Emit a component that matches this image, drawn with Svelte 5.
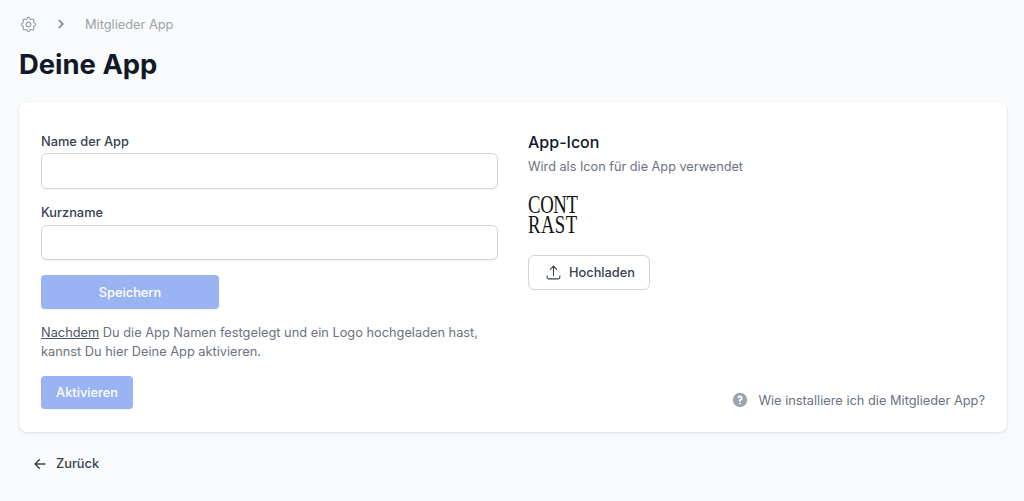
<script>
	let appName = $state('');
	let shortName = $state('');
</script>

<div class="page">
	<nav class="crumbs">
		<svg class="gear" viewBox="0 0 24 24" fill="none" stroke="currentColor" stroke-width="1.5" stroke-linecap="round" stroke-linejoin="round">
			<path d="M10.325 4.317c.426-1.756 2.924-1.756 3.35 0a1.724 1.724 0 002.573 1.066c1.543-.94 3.31.826 2.37 2.37a1.724 1.724 0 001.065 2.572c1.756.426 1.756 2.924 0 3.35a1.724 1.724 0 00-1.066 2.573c.94 1.543-.826 3.31-2.37 2.37a1.724 1.724 0 00-2.572 1.065c-.426 1.756-2.924 1.756-3.35 0a1.724 1.724 0 00-2.573-1.066c-1.543.94-3.31-.826-2.37-2.37a1.724 1.724 0 00-1.065-2.572c-1.756-.426-1.756-2.924 0-3.35a1.724 1.724 0 001.066-2.573c-.94-1.543.826-3.31 2.37-2.37.996.608 2.296.07 2.572-1.065z" />
			<circle cx="12" cy="12" r="3" />
		</svg>
		<svg class="chevron" viewBox="0 0 20 20" fill="currentColor">
			<path fill-rule="evenodd" clip-rule="evenodd" d="M7.293 14.707a1 1 0 010-1.414L10.586 10 7.293 6.707a1 1 0 011.414-1.414l4 4a1 1 0 010 1.414l-4 4a1 1 0 01-1.414 0z" />
		</svg>
		<span>Mitglieder App</span>
	</nav>

	<h1>Deine App</h1>

	<section class="card">
		<div class="left">
			<label for="app-name">Name der App</label>
			<input id="app-name" type="text" bind:value={appName} />

			<label for="short-name" class="second">Kurzname</label>
			<input id="short-name" type="text" bind:value={shortName} />

			<button class="primary save">Speichern</button>

			<p class="hint"><u>Nachdem</u> Du die App Namen festgelegt und ein Logo hochgeladen hast,<br />kannst Du hier Deine App aktivieren.</p>

			<button class="primary activate">Aktivieren</button>
		</div>

		<div class="right">
			<h2>App-Icon</h2>
			<p class="sub">Wird als Icon für die App verwendet</p>

			<div class="logo" aria-label="Contrast">
				<span>CONT</span>
				<span class="wide">RAST</span>
			</div>

			<button class="upload">
				<svg viewBox="0 0 24 24" fill="none" stroke="currentColor" stroke-width="1.5" stroke-linecap="round" stroke-linejoin="round">
					<path d="M3 16.5v2.25A2.25 2.25 0 005.25 21h13.5A2.25 2.25 0 0021 18.75V16.5m-13.5-9L12 3m0 0l4.5 4.5M12 3v13.5" />
				</svg>
				Hochladen
			</button>

			<div class="help">
				<svg viewBox="0 0 20 20" fill="currentColor">
					<path fill-rule="evenodd" clip-rule="evenodd" d="M18 10a8 8 0 11-16 0 8 8 0 0116 0zm-8-3a1 1 0 00-.867.5 1 1 0 11-1.731-1A3 3 0 0113 8a3.001 3.001 0 01-2 2.83V11a1 1 0 11-2 0v-1a1 1 0 011-1 1 1 0 100-2zm0 8a1 1 0 100-2 1 1 0 000 2z" />
				</svg>
				<span>Wie installiere ich die Mitglieder App?</span>
			</div>
		</div>
	</section>

	<div class="back">
		<svg viewBox="0 0 20 20" fill="currentColor">
			<path fill-rule="evenodd" clip-rule="evenodd" d="M9.707 16.707a1 1 0 01-1.414 0l-6-6a1 1 0 010-1.414l6-6a1 1 0 011.414 1.414L5.414 9H17a1 1 0 110 2H5.414l4.293 4.293a1 1 0 010 1.414z" />
		</svg>
		<span>Zurück</span>
	</div>
</div>

<style>
	:global(body) {
		background: #f9fafb;
	}

	.page {
		height: 501px;
		box-sizing: border-box;
		padding: 15px 17px 0 19px;
		font-family: Inter, "Liberation Sans", sans-serif;
		font-size: 12.8px;
		overflow: hidden;
	}

	.crumbs {
		display: flex;
		align-items: center;
		height: 18px;
		color: #9ca3af;
		font-size: 12.8px;
	}

	.gear {
		width: 19px;
		height: 19px;
		flex: none;
	}

	.chevron {
		width: 18px;
		height: 18px;
		margin-left: 14px;
		flex: none;
		color: #8b93a0;
	}

	.crumbs span {
		margin-left: 15px;
	}

	h1 {
		margin: 12px 0 0;
		font-size: 27.4px;
		line-height: 38px;
		font-weight: 700;
		color: #111827;
	}

	.card {
		display: grid;
		grid-template-columns: 457px 1fr;
		column-gap: 30px;
		height: 330px;
		box-sizing: border-box;
		margin-top: 19px;
		padding: 30px 22px 22px;
		background: #fff;
		border-radius: 8px;
		box-shadow: 0 1px 3px rgba(0, 0, 0, 0.1), 0 0 0 1px rgba(0, 0, 0, 0.02);
	}

	.left {
		display: flex;
		flex-direction: column;
		align-items: flex-start;
	}

	label {
		font-size: 12.8px;
		line-height: 20px;
		font-weight: 500;
		color: #374151;
	}

	.second {
		margin-top: 14px;
	}

	input {
		width: 100%;
		height: 35.5px;
		box-sizing: border-box;
		margin-top: 1px;
		border: 1px solid #d1d5db;
		border-radius: 6px;
		background: #fff;
		box-shadow: 0 1px 2px rgba(0, 0, 0, 0.05);
	}

	.second + input {
		margin-top: 2px;
	}

	button {
		font-family: inherit;
		cursor: pointer;
	}

	.primary {
		height: 34px;
		border: none;
		border-radius: 4px;
		background: #9ab3f2;
		color: #fff;
		font-size: 12.8px;
		font-weight: 500;
		box-shadow: 0 1px 2px rgba(0, 0, 0, 0.05);
	}

	.save {
		width: 178px;
		margin-top: 15px;
	}

	.hint {
		margin: 14px 0 0;
		font-size: 12.8px;
		line-height: 19px;
		color: #6b7280;
	}

	.hint u {
		color: #4b5563;
	}

	.activate {
		width: 92px;
		height: 33px;
		margin-top: 15px;
	}

	.right {
		display: flex;
		flex-direction: column;
		align-items: flex-start;
	}

	h2 {
		margin: -2px 0 0;
		font-size: 16px;
		line-height: 24px;
		font-weight: 500;
		color: #111827;
	}

	.sub {
		margin: 3px 0 0;
		font-size: 12.7px;
		line-height: 20px;
		color: #6b7280;
	}

	.logo {
		display: flex;
		flex-direction: column;
		margin-top: 18px;
		font-family: "Liberation Serif", serif;
		font-size: 26px;
		line-height: 20px;
		color: #111;
	}

	.logo span {
		display: block;
		transform: scaleX(0.72);
		transform-origin: left center;
		letter-spacing: -0.5px;
	}

	.logo .wide {
		letter-spacing: 0.6px;
	}

	.upload {
		display: flex;
		align-items: center;
		gap: 7px;
		width: 122px;
		height: 35px;
		margin-top: 20px;
		padding: 0 0 0 16px;
		border: 1px solid #d1d5db;
		border-radius: 6px;
		background: #fff;
		color: #374151;
		font-size: 12.8px;
		font-weight: 500;
	}

	.upload svg {
		width: 17px;
		height: 17px;
	}

	.help {
		display: flex;
		align-items: center;
		gap: 9px;
		align-self: flex-end;
		margin-top: auto;
		margin-bottom: 1px;
		color: #6b7280;
		font-size: 12.8px;
	}

	.help svg {
		width: 18px;
		height: 18px;
		color: #9ca3af;
	}

	.back {
		display: flex;
		align-items: center;
		gap: 9px;
		margin: 24px 0 0 14px;
		color: #374151;
		font-size: 12.8px;
		font-weight: 500;
	}

	.back svg {
		width: 14px;
		height: 14px;
	}
</style>
